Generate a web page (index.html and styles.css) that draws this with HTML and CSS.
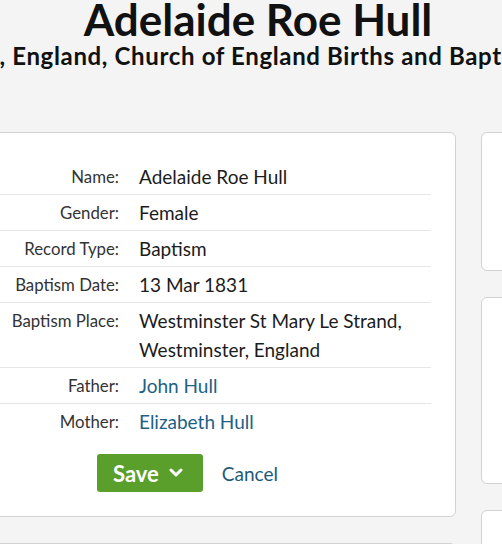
FILE: index.html
```html
<!DOCTYPE html>
<html lang="en">
<head>
<meta charset="utf-8">
<title>Adelaide Roe Hull</title>
<link rel="stylesheet" href="styles.css">
</head>
<body>
<div class="page">
  <header class="header">
    <h1 class="title">Adelaide Roe Hull</h1>
    <p class="subtitle">London, England, Church of England Births and Baptisms, 1813-1917</p>
  </header>
  <div class="columns">
    <div class="main-col">
      <section class="card record">
        <div class="rows">
          <div class="row"><div class="label">Name:</div><div class="value">Adelaide Roe Hull</div></div>
          <div class="row"><div class="label">Gender:</div><div class="value">Female</div></div>
          <div class="row"><div class="label">Record Type:</div><div class="value">Baptism</div></div>
          <div class="row"><div class="label">Baptism Date:</div><div class="value">13 Mar 1831</div></div>
          <div class="row"><div class="label">Baptism Place:</div><div class="value">Westminster St Mary Le Strand, Westminster, England</div></div>
          <div class="row"><div class="label">Father:</div><div class="value"><a class="link" href="#">John Hull</a></div></div>
          <div class="row last"><div class="label">Mother:</div><div class="value"><a class="link" href="#">Elizabeth Hull</a></div></div>
        </div>
        <div class="actions">
          <button class="save" type="button">Save <svg class="chev" width="14" height="10" viewBox="0 0 14 10"><polyline points="2,2 7,7 12,2" fill="none" stroke="#fff" stroke-width="3" stroke-linecap="round" stroke-linejoin="round"/></svg></button>
          <a class="cancel" href="#">Cancel</a>
        </div>
      </section>
      <section class="card next"></section>
    </div>
    <aside class="side-col">
      <div class="card side-a"></div>
      <div class="card side-b"></div>
      <div class="card side-c"></div>
    </aside>
  </div>
</div>
</body>
</html>
```

FILE: styles.css
```css
html, body {
  margin: 0;
  padding: 0;
  background: #f4f4f4;
  overflow: hidden;
}
body {
  font-family: Lato, "Noto Sans", sans-serif;
  color: #222;
}
.page {
  width: 1036px;
  margin-left: -260px;
}
.header {
  display: flex;
  flex-direction: column;
  align-items: center;
}
.title {
  margin: 0;
  font-size: 44px;
  line-height: 38px;
  font-weight: 700;
  color: #111;
  white-space: nowrap;
}
.subtitle {
  margin: 5px 0 0;
  padding-left: 90px;
  font-size: 24px;
  letter-spacing: 0.65px;
  line-height: 26px;
  font-weight: 700;
  color: #111;
  white-space: nowrap;
}
.columns {
  margin-top: 63px;
  display: grid;
  grid-template-columns: 716px 295px;
  column-gap: 25px;
  align-items: start;
}
.main-col, .side-col {
  display: flex;
  flex-direction: column;
  gap: 26px;
}
.card {
  background: #fff;
  border: 1px solid #d2d2d2;
  border-radius: 6px;
}
.record {
  padding: 26px 24px 24px 24px;
}
.row {
  display: flex;
  align-items: flex-start;
  gap: 20px;
  padding: 3px 0;
  border-bottom: 1px solid #e6e6e6;
}
.row.last {
  border-bottom: 0;
}
.label {
  width: 354px;
  flex: none;
  text-align: right;
  font-size: 16.8px;
  line-height: 28px;
  padding-top: 1px;
  color: #333;
}
.value {
  flex: 1;
  font-size: 19px;
  line-height: 29px;
  color: #1c1c1c;
}
.link {
  color: #1d6185;
  text-decoration: none;
}
.actions {
  display: flex;
  align-items: center;
  gap: 19px;
  margin-top: 15px;
  padding-left: 332px;
}
.save {
  display: flex;
  align-items: center;
  gap: 10px;
  height: 38px;
  padding: 0 20px 0 16px;
  border: 0;
  border-radius: 3px;
  background: #5a9e2c;
  color: #fff;
  font-family: inherit;
  font-size: 22px;
  font-weight: 700;
}
.chev {
  display: block;
}
.cancel {
  font-size: 19px;
  color: #1d5a78;
  text-decoration: none;
}
.next {
  height: 60px;
}
.side-a {
  height: 137px;
}
.side-b {
  height: 185px;
}
.side-c {
  height: 60px;
}
```
